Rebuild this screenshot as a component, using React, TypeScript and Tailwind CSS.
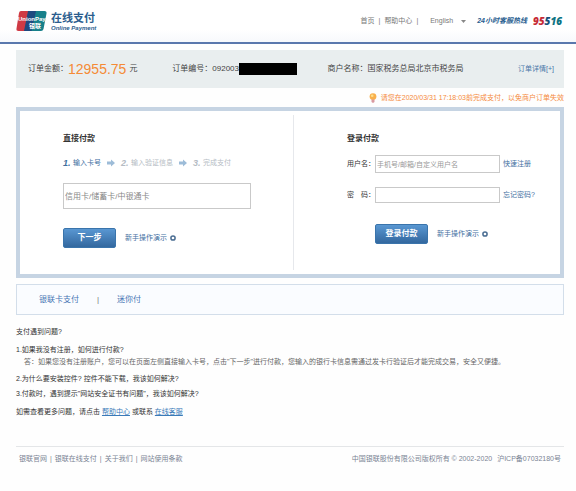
import { clsx } from 'clsx';
import type { ReactNode } from 'react';

const STEPS = ['输入卡号', '输入验证信息', '完成支付'];

const FOOTER_LINKS = ['银联官网', '银联在线支付', '关于我们', '网站使用条款'];

function UnionPayLogo() {
  return (
    <svg viewBox="0 0 31 22" className="h-[22px] w-[31px]" role="img" aria-label="UnionPay 银联">
      <path d="M4 1h9L9 21H2.500Q0 21 .5 18.500L3 3Q3.300 1 5 1Z" fill="#cf3a45" />
      <path d="M12 1h9l-4 20H8Z" fill="#1d4a80" />
      <path d="M20 1h8.500Q31 1 30.500 3.500L27.500 19Q27 21 25 21h-9.500Z" fill="#17808a" />
      <text x="2" y="11" fontSize="6" fontWeight="700" fill="#fff" fontFamily="Liberation Sans, sans-serif">
        UnionPay
      </text>
      <text x="13" y="18" fontSize="6" fontWeight="700" fill="#fff" fontFamily="Noto Sans CJK SC, sans-serif">
        银联
      </text>
    </svg>
  );
}

function StepArrow() {
  return (
    <svg viewBox="0 0 8 8" className="h-2 w-2" aria-hidden="true">
      <path d="M0 2.600h4V.5L8 4 4 7.500V5.400H0Z" fill="#9dbcd8" />
    </svg>
  );
}

function Bulb() {
  return (
    <svg viewBox="0 0 8 10" className="h-[10px] w-2" aria-hidden="true">
      <circle cx="4" cy="3.600" r="3.400" fill="#f9b04c" />
      <circle cx="3.200" cy="2.800" r="1.300" fill="#fde08c" />
      <path d="M2.500 6.500h3V9L4 10 2.500 9Z" fill="#d99aa0" />
    </svg>
  );
}

function DemoLink() {
  return (
    <a href="#demo" className="flex items-center gap-[3px] text-[7px] text-[#3f6f9f]">
      新手操作演示
      <svg viewBox="0 0 6 6" className="h-[6px] w-[6px]" aria-hidden="true">
        <circle cx="3" cy="3" r="2.100" fill="#fff" stroke="#4a6d92" strokeWidth="1.500" />
      </svg>
    </a>
  );
}

function PrimaryButton({ children }: { children: ReactNode }) {
  return (
    <button
      type="submit"
      className="h-5 w-[53px] rounded-xs border border-[#3a74ab] bg-linear-to-b from-[#5997d2] to-[#33689f] text-[8px] font-bold text-white"
    >
      {children}
    </button>
  );
}

function Header() {
  return (
    <header className="flex h-[44px] items-center justify-between border-b-2 border-[#5a78ad] bg-linear-to-b from-white from-70% to-[#f7f9fc] pr-[14px] pl-4">
      <div className="flex items-center gap-1">
        <UnionPayLogo />
        <div className="text-[#2b5d8e]">
          <div className="text-[11px] leading-[14px] font-bold">在线支付</div>
          <div className="text-[6px] leading-[7px] font-bold italic">Online Payment</div>
        </div>
      </div>
      <nav className="flex items-center text-[7px] text-[#777]">
        <a href="#home">首页</a>
        <span className="px-1">|</span>
        <a href="#help">帮助中心</a>
        <span className="px-1">|</span>
        <button type="button" className="flex items-center gap-2 pl-2">
          English
          <svg viewBox="0 0 5 3" className="h-[3px] w-[5px]" aria-hidden="true">
            <path d="M0 0h5L2.500 3Z" fill="#888" />
          </svg>
        </button>
        <span className="pl-[11px] font-bold text-[#2a6090] italic">24小时客服热线</span>
        <span className="pl-[6px] font-['Open_Sans',sans-serif] text-[10px] font-extrabold text-[#15507a] italic">
          <span className="text-[#c62a35]">95</span>5<span className="text-[#0e7382]">16</span>
        </span>
      </nav>
    </header>
  );
}

function OrderSummary() {
  return (
    <section className="mt-[6px] grid grid-cols-[144fr_155fr_190fr_auto] items-center bg-[#e9eeef] py-[9px] pr-[10px] pl-3 text-[8px] text-[#444]">
      <div className="flex items-center leading-5">
        订单金额：
        <span className="text-[14px] text-[#f58a35]">12955.75</span>
        <span className="pl-[3px]">元</span>
      </div>
      <div className="flex items-center">
        订单编号：092003
        <span className="h-3 w-[58px] bg-black" />
      </div>
      <div>商户名称：国家税务总局北京市税务局</div>
      <a href="#detail" className="text-[7px] text-[#4a77a8]">
        订单详情[+]
      </a>
    </section>
  );
}

function DirectPay() {
  return (
    <form className="pt-[22px] pr-[42px] pb-[26px] pl-[43px]">
      <h2 className="text-[8px] leading-[12px] font-bold text-[#333]">直接付款</h2>
      <ol className="mt-3 flex items-center leading-[12px]">
        {STEPS.map((step, i) => (
          <li key={step} className={clsx('flex items-center', i === 0 ? 'text-[#3f6f9f]' : 'text-[#b5bcc4]')}>
            {i > 0 && (
              <span className="px-[6px]">
                <StepArrow />
              </span>
            )}
            <span className="w-[10px] text-[9px] font-bold italic">{i + 1}.</span>
            <span className="text-[7px]">{step}</span>
          </li>
        ))}
      </ol>
      <input
        type="text"
        aria-label="卡号"
        placeholder="信用卡/储蓄卡/中银通卡"
        className="mt-[14px] block h-[26px] w-full border border-[#c9c9c9] bg-white px-[1px] text-[8px] placeholder:text-[#888]"
      />
      <div className="mt-[19px] flex items-center gap-[9px]">
        <PrimaryButton>下一步</PrimaryButton>
        <DemoLink />
      </div>
    </form>
  );
}

function LoginPay() {
  return (
    <form className="pt-[22px] pr-[26px] pb-[26px] pl-[53px]">
      <h2 className="text-[8px] leading-[12px] font-bold text-[#333]">登录付款</h2>
      <div className="mt-[10px] grid grid-cols-[28px_1fr_34px] items-center gap-y-[14px] text-[7px] text-[#3f6f9f]">
        <label htmlFor="username" className="text-[#333]">
          用户名：
        </label>
        <input
          id="username"
          type="text"
          placeholder="手机号/邮箱/自定义用户名"
          className="h-[18px] w-full min-w-0 border border-[#c9c9c9] bg-white px-[1px] text-[7px] placeholder:text-[#999]"
        />
        <a href="#register" className="pl-[3px] whitespace-nowrap">
          快速注册
        </a>
        <label htmlFor="password" className="text-[#333]">
          密　码：
        </label>
        <input
          id="password"
          type="password"
          className="h-4 w-full min-w-0 border border-[#c9c9c9] bg-white px-[1px] text-[7px]"
        />
        <a href="#forgot" className="pl-[3px] whitespace-nowrap">
          忘记密码?
        </a>
      </div>
      <div className="mt-[21px] flex items-center gap-[9px] pl-7">
        <PrimaryButton>登录付款</PrimaryButton>
        <DemoLink />
      </div>
    </form>
  );
}

function Faq() {
  return (
    <section className="mt-[11px] text-[7px] leading-[12px] text-[#333]">
      <h2>支付遇到问题?</h2>
      <p className="mt-[6px]">1.如果我没有注册，如何进行付款?</p>
      <p className="pl-2 whitespace-nowrap text-[#666]">
        答：如果您没有注册账户，您可以在页面左侧直接输入卡号，点击"下一步"进行付款，您输入的银行卡信息需通过发卡行验证后才能完成交易，安全又便捷。
      </p>
      <p className="mt-[5px]">2.为什么要安装控件? 控件不能下载，我该如何解决?</p>
      <p className="mt-[3px]">3.付款时，遇到提示"网站安全证书有问题"，我该如何解决?</p>
      <p className="mt-[6px]">
        如需查看更多问题，请点击{' '}
        <a href="#help" className="text-[#3a7ab8] underline">
          帮助中心
        </a>{' '}
        或联系{' '}
        <a href="#service" className="text-[#3a7ab8] underline">
          在线客服
        </a>
      </p>
    </section>
  );
}

export default function App() {
  return (
    <div className="min-h-screen bg-[#fefefe] font-['Liberation_Sans','Noto_Sans_CJK_SC',sans-serif]">
      <Header />
      <main className="pr-3 pl-4">
        <OrderSummary />
        <p className="flex items-center justify-end gap-1 py-1 text-[7px] leading-[11px] text-[#f58a3c]">
          <Bulb />
          请您在2020/03/31 17:18:03前完成支付，以免商户订单失效
        </p>
        <section className="grid grid-cols-[273fr_1px_266fr] border-4 border-[#c6d4e3] bg-white">
          <DirectPay />
          <div className="my-1 bg-[#e6e8ec]" />
          <LoginPay />
        </section>
        <nav className="mt-[6px] flex h-[31px] items-center border border-[#d3deea] bg-[#fafcff] pl-[22px] text-[8px] text-[#4674b4]">
          <a href="#card">银联卡支付</a>
          <span className="px-[18px] text-[#777]">|</span>
          <a href="#mini">迷你付</a>
        </nav>
        <Faq />
        <footer className="mt-7 flex justify-between border-t border-[#e4e6e8] px-[3px] pt-[6px] text-[7px] leading-[12px] text-[#7b8494]">
          <div className="flex">
            {FOOTER_LINKS.map((link, i) => (
              <span key={link}>
                {i > 0 && <span className="px-[3px]">|</span>}
                <a href="#about">{link}</a>
              </span>
            ))}
          </div>
          <div className="flex gap-[5px]">
            <span>中国银联股份有限公司版权所有 © 2002-2020</span>
            <span>沪ICP备07032180号</span>
          </div>
        </footer>
      </main>
    </div>
  );
}
